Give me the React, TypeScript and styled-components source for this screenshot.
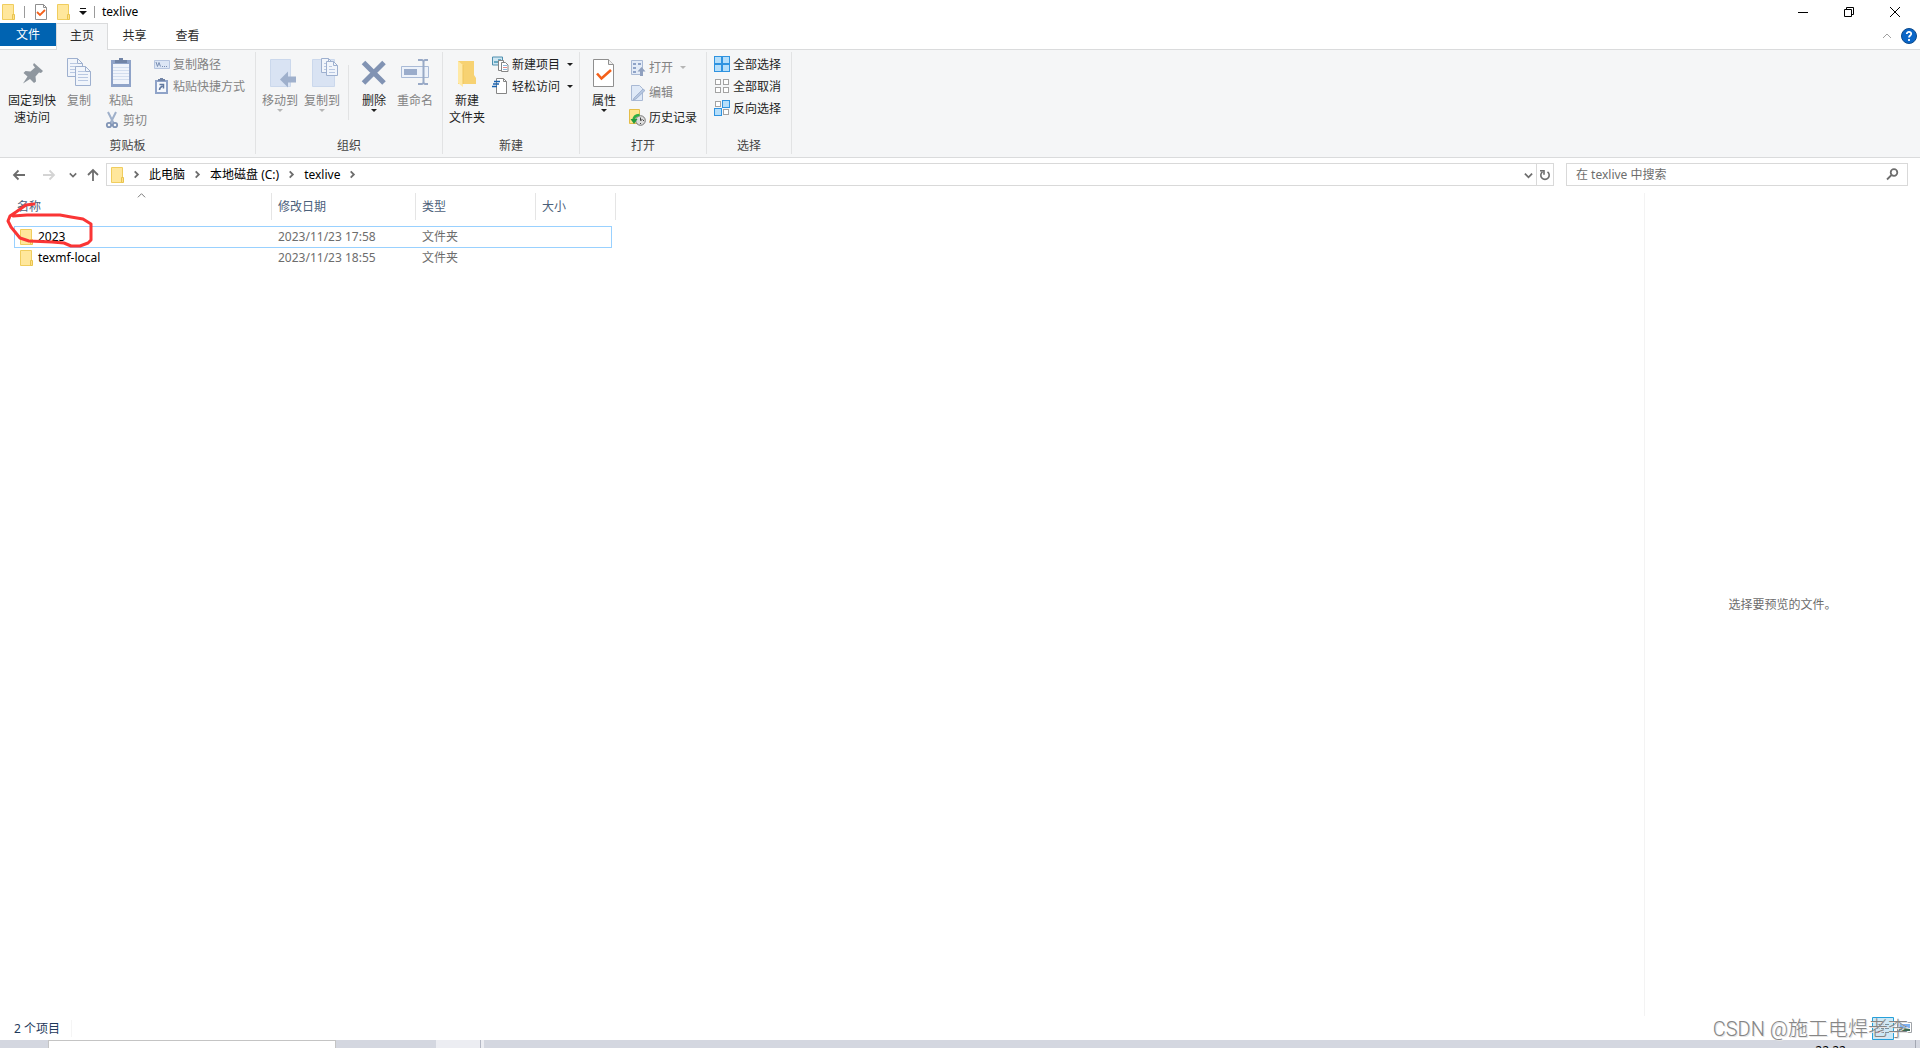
import React from "react";
import styled, { createGlobalStyle } from "styled-components";

const GlobalStyle = createGlobalStyle`
  * { box-sizing: border-box; }
  html, body { margin: 0; padding: 0; }
  body {
    background: #fff;
    color: #1e1e1e;
    font: 12px/17px "Noto Sans", "Noto Sans CJK SC", sans-serif;
  }
  button, input { font: inherit; color: inherit; }
  svg { display: block; flex: none; }
`;

const Window = styled.div`
  position: relative;
  display: flex;
  flex-direction: column;
  height: 100vh;
  overflow: hidden;
`;

const PlainButton = styled.button`
  display: flex;
  align-items: center;
  justify-content: center;
  padding: 0;
  border: 0;
  background: none;
  white-space: nowrap;
`;

/* Title bar */
const TitleBar = styled.header`
  display: flex;
  align-items: center;
  height: 23px;
  padding-left: 2px;
`;
const TitleRule = styled.span`
  width: 1px;
  height: 12px;
  background: #9a9a9a;
`;
const QuickTools = styled.div`
  display: flex;
  align-items: center;
  gap: 9px;
  padding: 0 7px 0 9px;
`;
const Title = styled.h1`
  margin: 0;
  padding-left: 7px;
  font-size: 12px;
  font-weight: 400;
  color: #000;
`;
const WindowButtons = styled.div`
  display: flex;
  margin-left: auto;
  padding-right: 2px;
`;
const WindowButton = styled(PlainButton)`
  width: 46px;
  height: 20px;
`;

/* Tabs */
const TabStrip = styled.nav`
  display: flex;
  align-items: flex-start;
  height: 27px;
  border-bottom: 1px solid #dadbdc;
`;
const Tab = styled(PlainButton)<{ $kind?: "file" | "active" }>`
  width: ${(p) => (p.$kind === "file" ? 56 : p.$kind === "active" ? 52 : 53)}px;
  height: ${(p) => (p.$kind === "active" ? 27 : p.$kind === "file" ? 23 : 25)}px;
  flex: none;
  color: ${(p) => (p.$kind === "file" ? "#fff" : "#2b2b2b")};
  background: ${(p) => (p.$kind === "file" ? "#0063b1" : p.$kind === "active" ? "#f5f6f7" : "none")};
  border: ${(p) => (p.$kind === "active" ? "1px solid #dadbdc" : "0")};
  border-bottom: 0;
  padding-bottom: ${(p) => (p.$kind === "active" ? 3 : 0)}px;
`;
const TabTools = styled.div`
  display: flex;
  align-items: center;
  gap: 9px;
  height: 26px;
  margin-left: auto;
  padding-right: 3px;
`;

/* Ribbon */
const Ribbon = styled.section`
  display: flex;
  height: 108px;
  padding: 2px 0 3px;
  background: #f5f6f7;
  border-bottom: 1px solid #dadbdc;
`;
const Group = styled.div`
  display: flex;
  flex-direction: column;
  border-right: 1px solid #e2e3e4;
`;
const GroupBody = styled.div<{ $start?: number; $end?: number }>`
  display: flex;
  align-items: flex-start;
  flex: 1;
  padding: 1px ${(p) => p.$end ?? 6}px 0 ${(p) => p.$start ?? 0}px;
`;
const GroupName = styled.div`
  height: 17px;
  text-align: center;
  color: #444;
`;
const LargeButton = styled(PlainButton)<{ $width: number }>`
  flex-direction: column;
  justify-content: flex-start;
  width: ${(p) => p.$width}px;
  padding-top: 5px;
  white-space: pre;
  &:disabled { color: #838383; }
`;
const LargeLabel = styled.span`
  margin-top: 2px;
`;
const PasteColumn = styled.div`
  width: 50px;
`;
const CutButton = styled(PlainButton)`
  gap: 3px;
  height: 22px;
  margin-left: 6px;
  &:disabled { color: #838383; }
`;
const SmallList = styled.div<{ $row?: number; $left?: number; $top?: number }>`
  display: grid;
  grid-auto-rows: ${(p) => p.$row ?? 22}px;
  justify-items: start;
  padding: ${(p) => p.$top ?? 0}px 0 0 ${(p) => p.$left ?? 1}px;
`;
const SmallButton = styled(PlainButton)`
  gap: 3px;
  &:disabled { color: #838383; }
`;
const DropMark = styled.span`
  padding-left: 4px;
`;
const ToolRule = styled.span`
  width: 1px;
  height: 55px;
  margin: 12px 5px 0;
  background: #e2e3e4;
`;

/* Address row */
const AddressRow = styled.div`
  display: flex;
  align-items: center;
  height: 35px;
  padding: 0 12px 2px 8px;
`;
const NavButton = styled(PlainButton)<{ $width: number }>`
  width: ${(p) => p.$width}px;
  height: 23px;
`;
const AddressBox = styled.div`
  display: flex;
  flex: 1;
  height: 23px;
  padding-left: 4px;
  border: 1px solid #d9d9d9;
`;
const Crumbs = styled.nav`
  display: flex;
  align-items: center;
  flex: 1;
  color: #000;
  a { color: inherit; text-decoration: none; }
`;
const CrumbMark = styled.span`
  display: flex;
  justify-content: center;
  width: 25px;
`;
const RefreshButton = styled(PlainButton)`
  width: 17px;
  border-left: 1px solid #d9d9d9;
`;
const SearchBox = styled.label`
  display: flex;
  align-items: center;
  width: 342px;
  height: 23px;
  margin-left: 12px;
  padding: 0 8px 0 9px;
  border: 1px solid #d9d9d9;
`;
const SearchInput = styled.input`
  flex: 1;
  min-width: 0;
  padding: 0;
  border: 0;
  outline: 0;
  background: none;
  &::placeholder { color: #6d6d6d; opacity: 1; }
`;

/* Content */
const Content = styled.main`
  position: relative;
  display: flex;
  flex: 1;
  min-height: 0;
`;
const ListPane = styled.div`
  flex: 1;
  padding-left: 14px;
`;
const FileTable = styled.table`
  table-layout: fixed;
  width: 602px;
  border-collapse: collapse;
`;
const HeadCell = styled.th<{ $width: number }>`
  position: relative;
  width: ${(p) => p.$width}px;
  height: 33px;
  padding: 0 6px 6px;
  text-align: left;
  font-weight: 400;
  color: #4c607a;
  background: linear-gradient(#e5e5e5, #e5e5e5) no-repeat right top / 1px 27px;
  &:first-child { padding-left: 3px; }
`;
const SortMark = styled.span`
  position: absolute;
  top: -2px;
  left: 123px;
`;
const FileRow = styled.tr<{ $focused?: boolean }>`
  position: relative;
  height: 21px;
  &::after {
    content: "";
    display: ${(p) => (p.$focused ? "block" : "none")};
    position: absolute;
    inset: 0 4px -1px 0;
    border: 1px solid #99d1ff;
  }
`;
const Cell = styled.td`
  padding: 0 6px;
  color: #6d6d6d;
`;
const FileName = styled.div`
  display: flex;
  align-items: center;
  gap: 5px;
  color: #000;
`;
const RedMark = styled.svg`
  position: absolute;
  left: 0;
  top: 0;
`;
const PreviewPane = styled.aside`
  display: flex;
  align-items: center;
  justify-content: center;
  width: 276px;
  border-left: 1px solid #f3f3f3;
  color: #6d6d6d;
`;

/* Bottom */
const StatusBar = styled.footer`
  display: flex;
  align-items: center;
  justify-content: space-between;
  height: 24px;
  padding: 0 7px 0 14px;
  color: #1e395b;
`;
const ViewButtons = styled.div`
  display: flex;
  align-items: center;
  gap: 3px;
`;
const Count = styled.span`
  padding-right: 11px;
  border-right: 1px solid #f5f5f5;
`;
const TaskBar = styled.div`
  display: flex;
  height: 8px;
  overflow: hidden;
  background: #d4d7e0;
`;
const TaskSearch = styled.div`
  width: 288px;
  margin-left: 48px;
  background: #fff;
  border: 1px solid #c4c4c4;
  border-bottom: 0;
`;
const TaskItem = styled.div`
  width: 48px;
  margin-left: 100px;
  background: linear-gradient(#b4b8c4, #b4b8c4) no-repeat 44px 0 / 1px 8px #ecedf2;
`;
const Clock = styled.time`
  margin-left: auto;
  padding: 2px 69px 0 0;
  color: #000;
`;
const DesktopEdge = styled.span`
  width: 5px;
  border-left: 1px solid #a3a7b2;
`;
const Watermark = styled.div`
  position: absolute;
  right: 12px;
  bottom: 7px;
  font: 300 20px/24px Roboto, "Noto Sans CJK SC", sans-serif;
  color: #858585;
  text-shadow: 1px 1px 0 #e4e4e4;
  white-space: nowrap;
`;

/* Icons */
const Folder = () => (
  <svg width="13" height="16" viewBox="0 0 13 16">
    <path d="M.5.5h11v15H.5z" fill="#ffe79c" stroke="#f0cd5e" />
    <path d="M10.500 10.500h2v5h-2z" fill="#ffe08a" stroke="#e9c44e" />
  </svg>
);
const CheckPage = ({ large }: { large?: boolean }) =>
  large ? (
    <svg width="32" height="32" viewBox="0 0 32 32">
      <path d="M5.500 1.500h15l5 5v22h-20z" fill="#fff" stroke="#8f8f8f" />
      <path d="M20.500 1.500v5h5" fill="#eee" stroke="#8f8f8f" />
      <path d="M9 15.500l4.500 5L23 12" fill="none" stroke="#f4601a" strokeWidth="2.600" />
    </svg>
  ) : (
    <svg width="14" height="16" viewBox="0 0 14 16">
      <path d="M1.500.5h8l3 3v12h-11z" fill="#fff" stroke="#8f8f8f" />
      <path d="M9.500.5v3h3" fill="none" stroke="#8f8f8f" />
      <path d="M3 8l3 3 5-5" fill="none" stroke="#f4601a" strokeWidth="1.800" />
    </svg>
  );
const Caret = ({ color = "#1e1e1e" }: { color?: string }) => (
  <svg width="6" height="3" viewBox="0 0 6 3"><path d="M0 0h6L3 3z" fill={color} /></svg>
);
const Pin = () => (
  <svg width="32" height="32" viewBox="0 0 32 32">
    <path d="M18 5l9 8-2 2-2-.5-3.500 4 .5 5-2 1.500-4-4-7 4.500 4.500-7-4-3.500 2-2 5 .5L19 9.500 17 7z" fill="#8f979f" />
  </svg>
);
const sheet = (x: number, y: number, w: number, h: number, fold = 5) => (
  <g>
    <path d={`M${x}.5 ${y}.5h${w - fold}l${fold} ${fold}v${h - fold}h-${w}z`} fill="#f1f5fb" stroke="#9eb0cf" />
    <path d={`M${x + w - fold}.5 ${y}.5v${fold}h${fold}`} fill="none" stroke="#9eb0cf" />
    {Array.from({ length: Math.floor((h - 5) / 3) }, (_, i) => (
      <path key={i} d={`M${x + 3} ${y + 5.5 + i * 3}h${w - (i < 1 ? 8 : 5)}`} stroke="#b9c8e2" />
    ))}
  </g>
);
const Copy = () => (
  <svg width="32" height="32" viewBox="0 0 32 32">{sheet(4, 0, 15, 18)}{sheet(12, 8, 15, 19)}</svg>
);
const Paste = () => (
  <svg width="32" height="32" viewBox="0 0 32 32">
    <path d="M6 2h20v27H6z" fill="#8fa3c8" />
    <path d="M8 6h16v20H8z" fill="#f0f4fb" />
    <path d="M10 5V2h4V0h4v2h4v3z" fill="#7184a6" />
    <path d="M8 9.500h16M8 12.500h16M8 15.500h16M8 18.500h16M8 21.500h16" stroke="#d3deef" />
  </svg>
);
const Scissors = () => (
  <svg width="16" height="18" viewBox="0 0 16 18" fill="none" stroke="#8195b6">
    <path d="M4 1l5.500 11M12 1L6.500 12" stroke="#9fb0ca" strokeWidth="2" />
    <circle cx="5" cy="14" r="2.200" strokeWidth="1.800" /><circle cx="11" cy="14" r="2.200" strokeWidth="1.800" />
  </svg>
);
const CopyPath = () => (
  <svg width="16" height="16" viewBox="0 0 16 16">
    <path d="M.5 4.500h15v8H.5z" fill="#dce6f5" stroke="#b6c5df" />
    <path d="M2 6l1.500 4.500L5 6.500l1.500 4" fill="none" stroke="#7a8fb3" />
    <path d="M8 10.500h1m1 0h1m1 0h1" stroke="#7a8fb3" />
  </svg>
);
const PasteLink = () => (
  <svg width="16" height="16" viewBox="0 0 16 16">
    <path d="M1 2h13v14H1z" fill="#8fa3c8" /><path d="M3 4h9v10H3z" fill="#f5f8fd" />
    <path d="M4 3V1h2V0h3v1h2v2z" fill="#7184a6" />
    <path d="M5.500 12c0-2 1-3 3-4M5.500 6.500h4v4" fill="none" stroke="#5f779f" strokeWidth="1.500" />
  </svg>
);
const MoveTo = () => (
  <svg width="32" height="32" viewBox="0 0 32 32">
    <path d="M6.500 1.500h20v27h-20z" fill="#d9e3f3" stroke="#cbd8ec" />
    <path d="M16 21.500l8-8v5h8v6h-8v5z" fill="#9fb0cc" />
  </svg>
);
const CopyTo = () => (
  <svg width="32" height="32" viewBox="0 0 32 32">
    <path d="M6.500 1.500h22v27h-22z" fill="#d9e3f3" stroke="#cbd8ec" />
    {sheet(15, 0, 11, 14, 4)}{sheet(20, 3, 11, 14, 4)}
  </svg>
);
const Delete = () => (
  <svg width="32" height="32" viewBox="0 0 32 32">
    <path d="M5.500 4.500L26 25M26 4.500L5.500 25" stroke="#8193b3" strokeWidth="5" />
  </svg>
);
const Rename = () => (
  <svg width="32" height="32" viewBox="0 0 32 32">
    <path d="M2.500 8.500h27v11h-27z" fill="#edf2fa" stroke="#a9bad6" />
    <path d="M5 11h13v6H5z" fill="#9aaccb" />
    <path d="M19 2h4l1.500 1L26 2h3M24.500 3v22M19 26h4l1.500-1L26 26h3" fill="none" stroke="#98a9c6" strokeWidth="2" />
  </svg>
);
const NewFolder = () => (
  <svg width="32" height="32" viewBox="0 0 32 32">
    <path d="M7 3h16v14l2 3v6H7z" fill="#f7d272" />
    <path d="M7 3l5 4v22l-5-4z" fill="#ffe9a5" />
    <path d="M12 7v19" stroke="#efc55c" />
  </svg>
);
const NewItem = () => (
  <svg width="17" height="16" viewBox="0 0 17 16">
    <path d="M.5 1h10v8H.5z" fill="#cfe6f2" stroke="#4e8fae" /><path d="M2 5h4V3h3v4H2z" fill="#66a9c2" />
    <path d="M6.500 4.500h5v10h-5z" fill="#fff" stroke="#858585" />
    <path d="M9.500 6.500h4l2.500 2.500v6.500H9.500z" fill="#fff" stroke="#858585" />
    <path d="M11 9.500h4M11 13.500h4" stroke="#8ab6db" /><path d="M11 11.500h4" stroke="#e58a8a" />
  </svg>
);
const EasyAccess = () => (
  <svg width="17" height="16" viewBox="0 0 17 16">
    <path d="M4.500.5h7l3 3v12h-10z" fill="#fff" stroke="#858585" /><path d="M11.500.5v3h3" fill="none" stroke="#858585" />
    <path d="M2 3.500h6M1 6h6M0 8.500h5" stroke="#1b63b0" strokeWidth="1.500" />
  </svg>
);
const OpenIcon = () => (
  <svg width="17" height="16" viewBox="0 0 17 16">
    <path d="M2.500.5h11v14h-11z" fill="#e3ebf7" stroke="#a9b9d4" />
    <path d="M4 3h3v2H4zM4 7h3v2H4zM4 11h3v2H4zM9 3h3v2H9z" fill="#8fa3c8" />
    <path d="M12.500 7l4 4.500H14V16h-3v-4.500H8.500z" fill="#8fa0bf" />
  </svg>
);
const EditIcon = () => (
  <svg width="17" height="16" viewBox="0 0 17 16">
    <path d="M2.500.5h8l3 3v12h-11z" fill="#dfe9f7" stroke="#a9b9d4" />
    <path d="M5 13l9-9 2 1.500L7 14l-3 1z" fill="#b5c6e0" stroke="#93a6c6" strokeWidth=".7" />
  </svg>
);
const History = () => (
  <svg width="17" height="17" viewBox="0 0 17 17">
    <path d="M.5.500h10v14H.5z" fill="#ffe58f" stroke="#e4bd49" />
    <circle cx="11.500" cy="11.500" r="4.800" fill="#ddd" stroke="#777" />
    <path d="M11.500 8.500v3l2-1M11.500 14v1M14 11.500h1" stroke="#444" fill="none" />
    <path d="M4.500 12c0-4 2-6 6-6" fill="none" stroke="#2fae45" strokeWidth="2.500" /><path d="M1.500 10h7L5 15z" fill="#239b3e" />
  </svg>
);
const SelectIcon = ({ on }: { on: boolean[] }) => (
  <svg width="16" height="16" viewBox="0 0 16 16">
    {on.map((lit, i) => {
      const x = (i % 2) * 8;
      const y = Math.floor(i / 2) * 8;
      return lit ? (
        <rect key={i} x={x + 0.5} y={y + 0.5} width="7" height="7" fill="#b5defa" stroke="#2f93e0" />
      ) : (
        <rect key={i} x={x + 1.5} y={y + 1.5} width="5" height="5" fill="#fff" stroke="#a3a3a3" />
      );
    })}
  </svg>
);
const Chevron = ({ dir, color = "#6d6d6d", size = 9, weight = 1 }: { dir: "up" | "down" | "right"; color?: string; size?: number; weight?: number }) => (
  <svg width={size} height={size} viewBox="0 0 10 10" fill="none" stroke={color} strokeWidth={weight}>
    <path d={dir === "up" ? "M1 7l4-4 4 4" : dir === "down" ? "M1 3l4 4 4-4" : "M3 1.500L6.500 5 3 8.500"} />
  </svg>
);
const Arrow = ({ dir, color = "#6d6d6d" }: { dir: "left" | "right" | "up"; color?: string }) => (
  <svg width="14" height="14" viewBox="0 0 14 14" fill="none" stroke={color} strokeWidth="1.800">
    <path d={dir === "left" ? "M13 7H2M6.500 2.500L2 7l4.500 4.500" : dir === "right" ? "M1 7h11M7.500 2.500L12 7l-4.500 4.500" : "M7 13V2M2 7l5-5 5 5"} />
  </svg>
);
const Refresh = () => (
  <svg width="12" height="12" viewBox="0 0 12 12" fill="none" stroke="#6d6d6d" strokeWidth="1.600">
    <path d="M8.500 2.800A4.200 4.200 0 1 1 3.500 2.800M1 1.800h4v4" />
  </svg>
);
const Magnifier = () => (
  <svg width="13" height="13" viewBox="0 0 13 13" fill="none" stroke="#6d6d6d" strokeWidth="1.800">
    <circle cx="8" cy="4.500" r="3.300" /><path d="M5.500 7L1 11.500" />
  </svg>
);
const Help = () => (
  <svg width="16" height="16" viewBox="0 0 16 16">
    <circle cx="8" cy="8" r="7.500" fill="#0a66c8" stroke="#0c4a8c" />
    <path d="M5.800 6c0-3 4.600-2.600 4.400 0C10.100 7.500 8 7.600 8 9.500M8 11v2" fill="none" stroke="#fff" strokeWidth="1.800" />
  </svg>
);
const DetailsView = () => (
  <svg width="22" height="23" viewBox="0 0 22 23">
    <path d="M.5.500h21v22H.5z" fill="#cbe8f6" stroke="#26a0da" />
    <path d="M5 7.500h3m1 0h3m1 0h4M5 11.500h3m1 0h3m1 0h4M5 15.500h3m1 0h3m1 0h4" stroke="#7d8e99" />
    <path d="M6 15h2" stroke="#d22" strokeWidth="2" />
  </svg>
);
const ThumbView = () => (
  <svg width="16" height="12" viewBox="0 0 16 12">
    <path d="M.5.500h14v10H.5z" fill="#fff" stroke="#a0a4a8" />
    <path d="M2 2h11v4H2z" fill="#7db2f0" /><path d="M2 5l4 1 7 1v2H2z" fill="#3d6b52" />
  </svg>
);

const files = [
  { name: "2023", date: "2023/11/23 17:58", type: "文件夹" },
  { name: "texmf-local", date: "2023/11/23 18:55", type: "文件夹" },
];

export default function App() {
  return (
    <Window>
      <GlobalStyle />
      <TitleBar>
        <Folder />
        <QuickTools>
          <TitleRule />
          <PlainButton aria-label="属性"><CheckPage /></PlainButton>
          <PlainButton aria-label="新建文件夹"><Folder /></PlainButton>
          <PlainButton aria-label="自定义快速访问工具栏">
            <svg width="8" height="7" viewBox="0 0 8 7" fill="#111"><path d="M1 0h6v1H1zM0 3h8L4 7z" /></svg>
          </PlainButton>
        </QuickTools>
        <TitleRule />
        <Title>texlive</Title>
        <WindowButtons>
          <WindowButton aria-label="最小化"><svg width="10" height="10"><path d="M0 5.500h10" stroke="#000" /></svg></WindowButton>
          <WindowButton aria-label="还原">
            <svg width="10" height="10" fill="none" stroke="#000"><path d="M.5 2.500h7v7h-7zM2.500 2.500v-2h7v7h-2" /></svg>
          </WindowButton>
          <WindowButton aria-label="关闭"><svg width="10" height="10" stroke="#000"><path d="M0 0l10 10M10 0L0 10" /></svg></WindowButton>
        </WindowButtons>
      </TitleBar>

      <TabStrip>
        <Tab $kind="file">文件</Tab>
        <Tab $kind="active">主页</Tab>
        <Tab>共享</Tab>
        <Tab>查看</Tab>
        <TabTools>
          <PlainButton aria-label="最小化功能区"><Chevron dir="up" color="#a0a0a0" size={10} /></PlainButton>
          <PlainButton aria-label="帮助"><Help /></PlainButton>
        </TabTools>
      </TabStrip>

      <Ribbon>
        <Group>
          <GroupBody $start={4} $end={10}>
            <LargeButton $width={56}><Pin /><LargeLabel>{"固定到快\n速访问"}</LargeLabel></LargeButton>
            <LargeButton $width={38} disabled><Copy /><LargeLabel>复制</LargeLabel></LargeButton>
            <PasteColumn>
              <LargeButton $width={46} disabled><Paste /><LargeLabel>粘贴</LargeLabel></LargeButton>
              <CutButton disabled><Scissors />剪切</CutButton>
            </PasteColumn>
            <SmallList $left={6}>
              <SmallButton disabled><CopyPath />复制路径</SmallButton>
              <SmallButton disabled><PasteLink />粘贴快捷方式</SmallButton>
            </SmallList>
          </GroupBody>
          <GroupName>剪贴板</GroupName>
        </Group>
        <Group>
          <GroupBody $start={3}>
            <LargeButton $width={42} disabled><MoveTo /><LargeLabel>移动到</LargeLabel><Caret color="#b5b5b5" /></LargeButton>
            <LargeButton $width={42} disabled><CopyTo /><LargeLabel>复制到</LargeLabel><Caret color="#b5b5b5" /></LargeButton>
            <ToolRule />
            <LargeButton $width={40}><Delete /><LargeLabel>删除</LargeLabel><Caret /></LargeButton>
            <LargeButton $width={42} disabled><Rename /><LargeLabel>重命名</LargeLabel></LargeButton>
          </GroupBody>
          <GroupName>组织</GroupName>
        </Group>
        <Group>
          <GroupBody>
            <LargeButton $width={48}><NewFolder /><LargeLabel>{"新建\n文件夹"}</LargeLabel></LargeButton>
            <SmallList>
              <SmallButton><NewItem />新建项目<DropMark><Caret /></DropMark></SmallButton>
              <SmallButton><EasyAccess />轻松访问<DropMark><Caret /></DropMark></SmallButton>
            </SmallList>
          </GroupBody>
          <GroupName>新建</GroupName>
        </Group>
        <Group>
          <GroupBody $end={9}>
            <LargeButton $width={48}><CheckPage large /><LargeLabel>属性</LargeLabel><Caret /></LargeButton>
            <SmallList $row={25} $top={2}>
              <SmallButton disabled><OpenIcon />打开<DropMark><Caret color="#b5b5b5" /></DropMark></SmallButton>
              <SmallButton disabled><EditIcon />编辑</SmallButton>
              <SmallButton><History />历史记录</SmallButton>
            </SmallList>
          </GroupBody>
          <GroupName>打开</GroupName>
        </Group>
        <Group>
          <GroupBody $start={6} $end={10}>
            <SmallList>
              <SmallButton><SelectIcon on={[true, true, true, true]} />全部选择</SmallButton>
              <SmallButton><SelectIcon on={[false, false, false, false]} />全部取消</SmallButton>
              <SmallButton><SelectIcon on={[false, true, true, false]} />反向选择</SmallButton>
            </SmallList>
          </GroupBody>
          <GroupName>选择</GroupName>
        </Group>
      </Ribbon>

      <AddressRow>
        <NavButton $width={22} aria-label="后退"><Arrow dir="left" /></NavButton>
        <NavButton $width={37} aria-label="前进"><Arrow dir="right" color="#d4d4d4" /></NavButton>
        <NavButton $width={12} aria-label="最近浏览的位置"><Chevron dir="down" size={8} weight={2} /></NavButton>
        <NavButton $width={27} aria-label="上移"><Arrow dir="up" /></NavButton>
        <AddressBox>
          <Crumbs>
            <Folder />
            <CrumbMark><Chevron dir="right" weight={2} /></CrumbMark>
            <a href="#pc">此电脑</a>
            <CrumbMark><Chevron dir="right" weight={2} /></CrumbMark>
            <a href="#c">本地磁盘 (C:)</a>
            <CrumbMark><Chevron dir="right" weight={2} /></CrumbMark>
            <a href="#texlive">texlive</a>
            <CrumbMark><Chevron dir="right" weight={2} /></CrumbMark>
          </Crumbs>
          <NavButton $width={16} aria-label="以前的位置"><Chevron dir="down" weight={2} /></NavButton>
          <RefreshButton aria-label="刷新"><Refresh /></RefreshButton>
        </AddressBox>
        <SearchBox>
          <SearchInput type="text" aria-label="搜索" placeholder="在 texlive 中搜索" />
          <Magnifier />
        </SearchBox>
      </AddressRow>

      <Content>
        <ListPane>
          <FileTable>
            <thead>
              <tr>
                <HeadCell $width={258}>名称<SortMark><Chevron dir="up" /></SortMark></HeadCell>
                <HeadCell $width={144}>修改日期</HeadCell>
                <HeadCell $width={120}>类型</HeadCell>
                <HeadCell $width={80}>大小</HeadCell>
              </tr>
            </thead>
            <tbody>
              {files.map((f, i) => (
                <FileRow key={f.name} $focused={i === 0}>
                  <Cell><FileName><Folder />{f.name}</FileName></Cell>
                  <Cell>{f.date}</Cell>
                  <Cell>{f.type}</Cell>
                  <Cell />
                </FileRow>
              ))}
            </tbody>
          </FileTable>
        </ListPane>
        <RedMark width="100" height="60" viewBox="0 193 100 60" fill="none" stroke="#fa3535" strokeWidth="3" strokeLinejoin="round" strokeLinecap="round">
          <path d="M34 204L26 205 16 212 10 216 8 221 11 227 20 238 29 241 52 242 64 243 71 246 80 246 88 243 91 240 91 224 83 219 71 217 60 215 42 215 27 215 13 216" />
        </RedMark>
        <PreviewPane>选择要预览的文件。</PreviewPane>
      </Content>

      <StatusBar>
        <Count>2 个项目</Count>
        <ViewButtons>
          <PlainButton aria-label="详细信息"><DetailsView /></PlainButton>
          <PlainButton aria-label="大缩略图"><ThumbView /></PlainButton>
        </ViewButtons>
      </StatusBar>
      <TaskBar>
        <TaskSearch />
        <TaskItem />
        <Clock>22:22</Clock>
        <DesktopEdge />
      </TaskBar>
      <Watermark>CSDN @施工电焊老李</Watermark>
    </Window>
  );
}
